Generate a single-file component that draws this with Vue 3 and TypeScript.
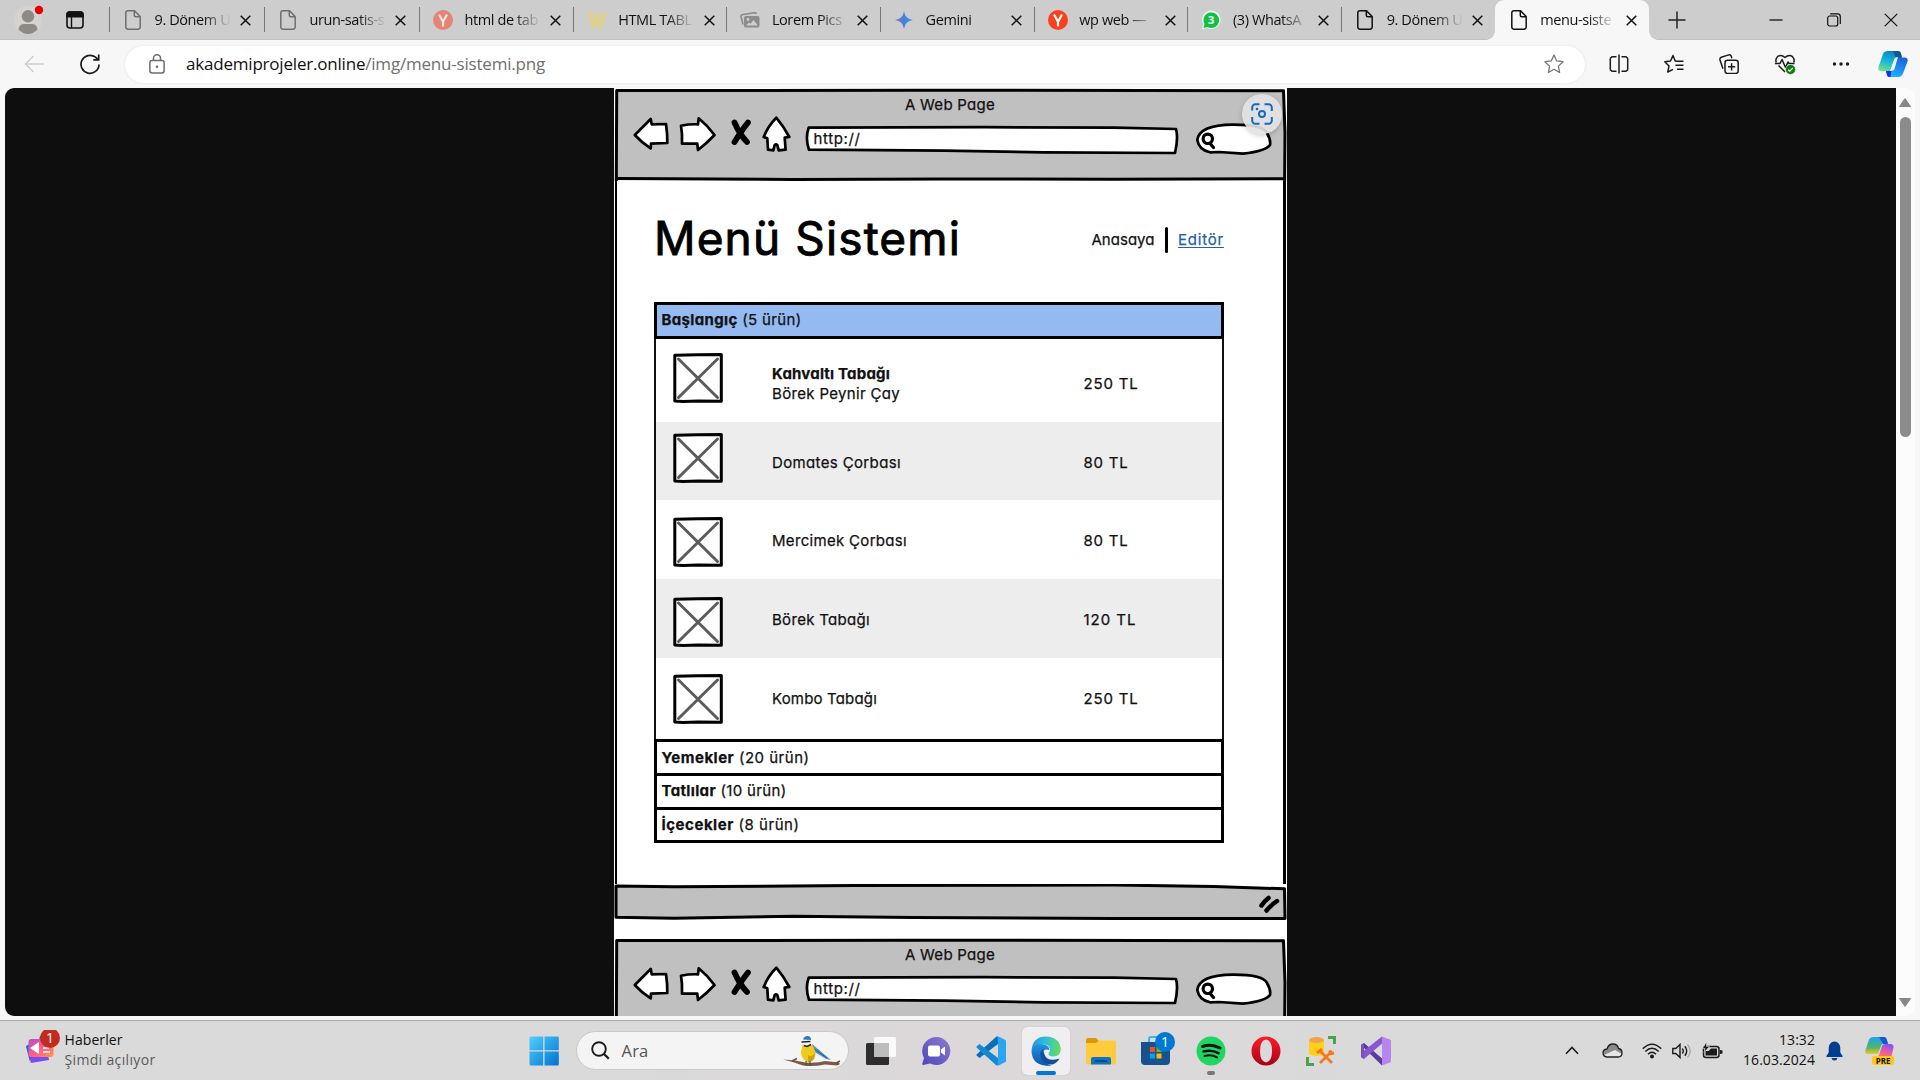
<script setup lang="ts">
interface Tab {
  icon: 'file' | 'yandex' | 'w' | 'photos' | 'gemini' | 'whatsapp'
  title: string
  faded?: boolean
  active?: boolean
}

interface Dish {
  name: string
  nameWidth: number
  detail?: string
  detailWidth?: number
  price: string
  priceWidth: number
  height: number
  thumbOffset: number
}

const tabs: Tab[] = [
  { icon: 'file', title: '9. Dönem U', faded: true },
  { icon: 'file', title: 'urun-satis-s', faded: true },
  { icon: 'yandex', title: 'html de tab', faded: true },
  { icon: 'w', title: 'HTML TABL' },
  { icon: 'photos', title: 'Lorem Pics' },
  { icon: 'gemini', title: 'Gemini' },
  { icon: 'yandex', title: 'wp web —' },
  { icon: 'whatsapp', title: '(3) WhatsA' },
  { icon: 'file', title: '9. Dönem U' },
  { icon: 'file', title: 'menu-siste', active: true },
]

const dishes: Dish[] = [
  { name: 'Kahvaltı Tabağı', nameWidth: 118, detail: 'Börek Peynir Çay', detailWidth: 128, price: '250 TL', priceWidth: 55, height: 82.5, thumbOffset: 14 },
  { name: 'Domates Çorbası', nameWidth: 129, price: '80 TL', priceWidth: 45, height: 78.5, thumbOffset: 11.5 },
  { name: 'Mercimek Çorbası', nameWidth: 135, price: '80 TL', priceWidth: 45, height: 79, thumbOffset: 17 },
  { name: 'Börek Tabağı', nameWidth: 98, price: '120 TL', priceWidth: 53, height: 78.7, thumbOffset: 18 },
  { name: 'Kombo Tabağı', nameWidth: 105, price: '250 TL', priceWidth: 55, height: 81.8, thumbOffset: 16.8 },
]

const sections = [
  { name: 'Yemekler', count: '(20 ürün)', width: 148 },
  { name: 'Tatlılar', count: '(10 ürün)', width: 125 },
  { name: 'İçecekler', count: '(8 ürün)', width: 138 },
]

const windows = ['menu', 'next']

/* Tracks a line of text out, or in, to a given width. */
const vFit = {
  mounted(el: HTMLElement, binding: { value: number }) {
    const length = (el.textContent ?? '').length
    const natural = el.getBoundingClientRect().width
    el.style.letterSpacing = `${(binding.value - natural) / length}px`
  },
}
</script>

<template>
  <div class="screen">
    <header class="tabbar">
      <svg class="profile" width="32" height="32" viewBox="0 0 32 32">
        <circle cx="15" cy="18" r="14" fill="#d5d3cf" />
        <circle cx="15" cy="14.300" r="6.200" fill="#8d8985" />
        <path d="M5.500 27.500Q6 22 11 22h8q5 0 5.500 5.500Q20 32 15 32T5.500 27.500Z" fill="#8d8985" />
        <circle cx="26" cy="8" r="4.200" fill="#e60000" />
      </svg>
      <svg class="workspaces" width="20" height="20" viewBox="0 0 20 20">
        <rect x="2" y="2" width="16" height="16" rx="3" fill="none" stroke="#111" stroke-width="1.600" />
        <path d="M1.200 7.500V4.500a3.300 3.300 0 0 1 3.300-3.300h11a3.300 3.300 0 0 1 3.300 3.300v3Z" fill="#111" />
        <path d="M6.500 7v11" stroke="#111" stroke-width="1.400" />
      </svg>
      <div class="tabs">
        <div v-for="(tab, i) in tabs" :key="i" class="tab" :class="{ active: tab.active, faded: tab.faded }">
          <span class="tab-icon">
            <svg v-if="tab.icon === 'file'" width="16" height="20" viewBox="0 0 16 20" fill="none" stroke="currentColor" stroke-width="1.500">
              <path d="M3 .800h6.500L15.200 6.500V17a2.200 2.200 0 0 1-2.200 2.200H3A2.200 2.200 0 0 1 .800 17V3A2.200 2.200 0 0 1 3 .800Z" />
              <path d="M9.300 1v4.200a1.500 1.500 0 0 0 1.500 1.500H15" />
            </svg>
            <svg v-else-if="tab.icon === 'yandex'" width="20" height="20" viewBox="0 0 20 20">
              <circle cx="10" cy="10" r="10" fill="#fc3f1d" />
              <path d="M6 4.500l4 7.200M14 4.500l-4 7.200V16.500" fill="none" stroke="#fff" stroke-width="2.200" />
            </svg>
            <svg v-else-if="tab.icon === 'w'" width="18" height="20" viewBox="0 0 18 20">
              <path d="M1 1l4.500 17L9 3l3.500 15L17 1" fill="none" stroke="#e6d36c" stroke-width="2.200" />
            </svg>
            <svg v-else-if="tab.icon === 'photos'" width="20" height="16" viewBox="0 0 20 16">
              <path d="M3 12.500L1 4.500Q.700 3 2 2.700L14.500.700Q16 .600 16.300 2" fill="none" stroke="#8b8b8b" stroke-width="1.600" />
              <rect x="4" y="4" width="15.500" height="11.500" rx="2" fill="#8b8b8b" />
              <circle cx="8" cy="7.500" r="1.400" fill="#cdcdcd" />
              <path d="M6 13.500l3-3 1.500 1.200 3.200-3.700 4 5.500Z" fill="#cdcdcd" />
            </svg>
            <svg v-else-if="tab.icon === 'gemini'" width="18" height="18" viewBox="0 0 18 18">
              <defs>
                <linearGradient id="gem" x1="0" y1="0" x2="1" y2="0">
                  <stop offset="0" stop-color="#8a6fc8" />
                  <stop offset=".5" stop-color="#4a80d8" />
                  <stop offset="1" stop-color="#2aa0ea" />
                </linearGradient>
              </defs>
              <path d="M9 0Q10 8 18 9 10 10 9 18 8 10 0 9 8 8 9 0Z" fill="url(#gem)" />
            </svg>
            <svg v-else width="20" height="20" viewBox="0 0 20 20">
              <path d="M1 19.500l1-5.500A9.300 9.300 0 1 1 6 18Z" fill="#e8f3ea" />
              <path d="M2.500 18l1-4A7.800 7.800 0 1 1 6.500 17Z" fill="#12c143" />
              <text x="10.200" y="14" text-anchor="middle" class="wa-count">3</text>
            </svg>
          </span>
          <span class="tab-title">{{ tab.title }}</span>
          <svg class="tab-close" width="11" height="11" viewBox="0 0 11 11"><path d="M.700.700l9.600 9.600M10.300.700L.700 10.300" stroke="#111" stroke-width="1.500" /></svg>
        </div>
      </div>
      <svg class="new-tab" width="18" height="18" viewBox="0 0 18 18"><path d="M9 .500v17M.500 9h17" stroke="#222" stroke-width="1.500" /></svg>
      <div class="captions">
        <svg width="14" height="14" viewBox="0 0 14 14"><path d="M.500 7h13" stroke="#111" stroke-width="1.300" /></svg>
        <svg width="14" height="14" viewBox="0 0 14 14" fill="none" stroke="#111" stroke-width="1.200">
          <rect x=".700" y="3" width="10" height="10" rx="2" /><path d="M3.200.900H10.500a2.800 2.800 0 0 1 2.800 2.800V11" />
        </svg>
        <svg width="14" height="14" viewBox="0 0 14 14"><path d="M.800.800l12.400 12.400M13.200.800L.800 13.200" stroke="#111" stroke-width="1.200" /></svg>
      </div>
    </header>

    <div class="toolbar">
      <svg class="back" width="21" height="18" viewBox="0 0 21 18" fill="none" stroke="#cfcfcf" stroke-width="1.600"><path d="M20 9H1.500M9.500 1L1.500 9l8 8" /></svg>
      <svg class="reload" width="21" height="21" viewBox="0 0 21 21" fill="none" stroke="#1b1b1b" stroke-width="1.700">
        <path d="M19 10.500A9 9 0 1 1 15.500 3.200L18 5.500" /><path d="M18.700.500v5.300h-5.400" />
      </svg>
      <div class="address">
        <svg width="16" height="20" viewBox="0 0 16 20" fill="none" stroke="#6d6d6d" stroke-width="1.500">
          <rect x=".900" y="6.500" width="14.200" height="12.500" rx="2.200" /><path d="M4.500 6.500V4.300a3.500 3.500 0 0 1 7 0v2.200" />
          <circle cx="8" cy="12.700" r="1.300" fill="#6d6d6d" stroke="none" />
        </svg>
        <span v-fit="359" class="url">akademiprojeler.online<span class="path">/img/menu-sistemi.png</span></span>
        <svg class="star" width="20" height="20" viewBox="0 0 20 20" fill="none" stroke="#767676" stroke-width="1.300" stroke-linejoin="round">
          <path d="M10 1l2.700 5.900 6.400.800-4.700 4.400 1.200 6.400L10 15.300l-5.600 3.200 1.200-6.400L.900 7.700l6.400-.800Z" />
        </svg>
      </div>
      <div class="actions">
        <svg width="20" height="20" viewBox="0 0 20 20" fill="none" stroke="#1b1b1b" stroke-width="1.500">
          <path d="M7.500 2.800H3.500A2.200 2.200 0 0 0 1.300 5v10a2.200 2.200 0 0 0 2.200 2.200h4M12.500 2.800h4A2.200 2.200 0 0 1 18.700 5v10a2.200 2.200 0 0 1-2.200 2.200h-4M10 .500v19" />
        </svg>
        <svg width="20" height="20" viewBox="0 0 20 20" fill="none" stroke="#1b1b1b" stroke-width="1.500" stroke-linejoin="round">
          <path d="M13 7.300l-1.800-.300L9 1.500 6.500 7 .800 7.700 5 12l-1.200 6L9 15.300M13 7.300h6.500M11.500 11.300h8M13 15.300h6.500" />
        </svg>
        <svg width="20" height="20" viewBox="0 0 20 20" fill="none" stroke="#1b1b1b" stroke-width="1.500">
          <path d="M4 14.800L1 6Q.500 4 2.300 3.300L9.700.900Q11.800.500 12.300 2.400l.500 1.800" />
          <rect x="6" y="6.200" width="13.200" height="13.200" rx="2.500" /><path d="M12.600 9.200v7.200M9 12.800h7.200" />
        </svg>
        <svg width="21" height="21" viewBox="0 0 21 21" fill="none" stroke="#1b1b1b" stroke-width="1.500" stroke-linejoin="round">
          <path d="M1.300 8.500Q0 5 2.500 2.700 6-.200 10 3.500q4-3.700 7.500-.800 2.500 2.300 1.200 5.800M3.500 11.500L10 18" />
          <path d="M0 9.500h5l2-4 3.500 8L13 8l1 1.500h5.500" />
          <circle cx="15.500" cy="15.500" r="5" fill="#107c10" stroke="#f7f7f7" stroke-width=".600" /><path d="M13.200 15.700l1.600 1.500 3-3.200" stroke="#fff" stroke-width="1.200" />
        </svg>
        <svg width="20" height="20" viewBox="0 0 20 20" fill="#1b1b1b"><circle cx="3.500" cy="10" r="1.700" /><circle cx="10" cy="10" r="1.700" /><circle cx="16.500" cy="10" r="1.700" /></svg>
      </div>
      <svg class="copilot" width="30" height="28" viewBox="0 0 30 28">
        <defs>
          <linearGradient id="cpA" x1=".6" y1="0" x2=".3" y2="1"><stop offset="0" stop-color="#0a7fc0" /><stop offset=".5" stop-color="#12b5dd" /><stop offset="1" stop-color="#6be08a" /></linearGradient>
          <linearGradient id="cpB" x1=".7" y1="0" x2=".3" y2="1"><stop offset="0" stop-color="#1b62e0" /><stop offset="1" stop-color="#1fb4ff" /></linearGradient>
        </defs>
        <path d="M10 1h10q2 0 2.800 2L24 7h-4q-3 0-4 3l-3 9q-1 2-3.500 2H3Q-.500 21 .500 17L5 4q1.200-3 5-3Z" fill="url(#cpA)" />
        <path d="M15 1h5q2 0 2.800 2L24 8h-6Z" fill="#115c86" />
        <path d="M20 27H11q-1.500 0-2-2l-1-4h2q3 0 4-3l3-9q.800-1.500 3-1.500h7q3.500.500 2.500 4L25 23.500Q23.500 27 20 27Z" fill="url(#cpB)" />
        <path d="M8 21h2q2.500 0 3.500-2l-1 8H11q-1.500 0-2-2Z" fill="#1437d8" />
        <path d="M16 10q1-3 4-3l-3.500 12q-.800 2-3.500 2-2.500 0-2 0 1.500-.500 2-2Z" fill="#eef6fb" />
      </svg>
    </div>

    <main class="viewport">
      <div class="canvas">
        <div class="sheet">
          <section v-for="w in windows" :key="w" class="wire" :class="w">
            <div class="chrome">
              <svg class="chrome-art" width="673" height="93" viewBox="0 0 673 93" stroke-linejoin="round" stroke-linecap="round">
                <path d="M2.700 2.500H669.500L671 92H2.700Z" fill="#c0c0c0" />
                <path d="M2.300 94L2.700 2.600 300 2.200 669.500 2.700 671 45 670.600 94" fill="none" stroke="#000" stroke-width="3" />
                <path d="M3 90.500L180 91.500 330 91 500 91.200 669 90.700" fill="none" stroke="#000" stroke-width="3" />
                <g fill="#fff" stroke="#000" stroke-width="2.700">
                  <path d="M20.800 47L36.700 31 37.700 36.300 52 36Q53.500 46 53.300 55L37 55.700 36.700 60.300Q28 55 20.800 47Z" />
                  <path d="M67 37.700Q75 36 84 36.300L84.700 30.300Q94 38 100.500 47 92 56 84 62L83.300 55.700 68 55.700Q68.500 46 67 37.700Z" />
                  <path d="M162.300 29.700Q170 39 175.300 49L170.700 49.700 171.600 61.700 164.700 62.300 163.300 57Q162 55.800 160.700 57L159.300 62.300 154 61.700 153.300 50.300 149.700 49Q154 38 162.300 29.700Z" />
                  <path d="M194.700 39.700L370 39.200 500 39.700 562 41Q564.500 50 561 65L430 64.300 330 62.700 195 61.700Q191 50 194.700 39.700Z" />
                  <path d="M583.300 52Q585 37 619 36.600 649 36.500 653 45 657 52 656 57 652 63 629 65.700L605 64 596 64.300Q585 62 583.300 52Z" />
                </g>
                <g fill="none" stroke="#000">
                  <path d="M120.500 34.500Q126 47 133 54M134 34.500Q128 42 120.500 54" stroke-width="5.800" />
                  <circle cx="593.800" cy="50.800" r="4.700" stroke-width="3.200" />
                  <path d="M596 55.500l3.500 4" stroke-width="3.200" />
                </g>
              </svg>
              <div class="chrome-text">
                <div class="page-title"><span v-fit="90">A Web Page</span></div>
                <div class="page-url"><span v-fit="47">http://</span></div>
              </div>
            </div>

            <template v-if="w === 'menu'">
              <div class="page">
                <div class="heading">
                  <h1><span v-fit="307">Menü Sistemi</span></h1>
                  <nav>
                    <span v-fit="63">Anasaya</span>
                    <i class="bar" />
                    <a v-fit="46">Editör</a>
                  </nav>
                </div>

                <div class="accordion">
                  <div class="section open"><span v-fit="140"><b>Başlangıç</b> (5 ürün)</span></div>
                  <div class="dishes">
                    <div v-for="d in dishes" :key="d.name" class="dish" :style="{ height: d.height + 'px' }">
                      <svg class="thumb" :style="{ marginTop: d.thumbOffset + 'px' }" width="50" height="50" viewBox="0 0 50 50">
                        <path d="M1.800 2.200L25 1.800 48.300 1.500V48.200L25 48 10 48.500 1.800 48Z" fill="#fff" stroke="#000" stroke-width="3" stroke-linejoin="round" />
                        <path d="M5.500 6L44.500 44.500M44.500 6L5.500 44.500" stroke="#5c5c5c" stroke-width="3" stroke-linecap="round" />
                      </svg>
                      <div class="dish-name">
                        <span v-fit="d.nameWidth" :class="{ strong: d.detail }">{{ d.name }}</span>
                        <span v-if="d.detail" v-fit="d.detailWidth">{{ d.detail }}</span>
                      </div>
                      <div class="dish-price"><span v-fit="d.priceWidth">{{ d.price }}</span></div>
                    </div>
                  </div>
                  <div v-for="s in sections" :key="s.name" class="section">
                    <span v-fit="s.width"><b>{{ s.name }}</b> {{ s.count }}</span>
                  </div>
                </div>
              </div>

              <svg class="status" width="673" height="36" viewBox="0 0 673 36" stroke-linejoin="round" stroke-linecap="round">
                <path d="M2 2L60 2.800 240 1.500 500 1 600 2.500 670.500 4.800 671 34.500 500 34.500 300 33.500 180 32.200 60 34.300 2 33.300Z" fill="#c0c0c0" stroke="#000" stroke-width="3" />
                <path d="M647.500 21.500Q650 17.500 654.500 14M652.500 26.500Q657 21 663 17" fill="none" stroke="#000" stroke-width="4.500" />
              </svg>
            </template>
          </section>
        </div>
        <div class="visual-search">
          <svg width="22" height="22" viewBox="0 0 22 22" fill="none" stroke="#0f6cbd" stroke-width="2">
            <path d="M1.200 7.500V4.500A3.300 3.300 0 0 1 4.500 1.200M7.500 1.200h1M13.500 1.200h4a3.300 3.300 0 0 1 3.300 3.300v3.500M20.800 14v3.500a3.300 3.300 0 0 1-3.300 3.300h-4M8.500 20.800h-4a3.300 3.300 0 0 1-3.300-3.300V14M4.500 1.200h3.500" />
            <circle cx="11" cy="11" r="3" /><circle cx="6" cy="6" r="1.300" fill="#0f6cbd" stroke="none" />
          </svg>
        </div>
      </div>
      <div class="scrollbar">
        <svg width="12" height="9" viewBox="0 0 12 9"><path d="M6 .500L11.500 8.500H.500Z" fill="#888" stroke="#888" stroke-linejoin="round" /></svg>
        <div class="thumb-bar" />
        <svg class="down" width="12" height="9" viewBox="0 0 12 9"><path d="M6 8.500L.500.500H11.500Z" fill="#888" stroke="#888" stroke-linejoin="round" /></svg>
      </div>
    </main>

    <footer class="taskbar">
      <div class="widgets">
        <svg width="36" height="36" viewBox="0 0 36 36">
          <defs><linearGradient id="nw" x1="0" y1="0" x2="1" y2="1"><stop offset="0" stop-color="#b24fc8" /><stop offset=".5" stop-color="#ff5a91" /><stop offset="1" stop-color="#ff9a3c" /></linearGradient></defs>
          <path d="M14 6l14-4v12H12Z" fill="#1769d8" />
          <path d="M0 16l20-3 3 17L5 33Z" fill="#7a4df0" /><path d="M0 16l4-2v18Z" fill="#2a66c8" />
          <rect x="2.500" y="9" width="25" height="18" rx="3" fill="url(#nw)" />
          <path d="M4 18l9-6v12Z" fill="#fff" /><path d="M17 18h6M17 22h7" stroke="#fff" stroke-width="1.600" />
          <circle cx="24" cy="8" r="10" fill="#c42b1c" />
          <text x="24" y="13" text-anchor="middle" class="badge-text">1</text>
        </svg>
        <div class="widget-text"><span v-fit="58">Haberler</span><span v-fit="91" class="dim">Şimdi açılıyor</span></div>
      </div>

      <div class="pinned">
        <svg class="start" width="30" height="30" viewBox="0 0 30 30">
          <defs><linearGradient id="win" x1="0" y1="0" x2="1" y2="1"><stop offset="0" stop-color="#4fd0fb" /><stop offset="1" stop-color="#0071d2" /></linearGradient></defs>
          <path d="M.500 2Q.500.500 2 .500h12.200v13.700H.500ZM15.500.500H28.500q1.300 0 1.300 1.300V14.200H15.500ZM.500 15.500h13.700V29.500H2Q.500 29.500.500 28ZM15.500 15.500H29.800V28q0 1.500-1.500 1.500H15.500Z" fill="url(#win)" />
        </svg>
        <div class="search">
          <svg width="19" height="19" viewBox="0 0 19 19" fill="none" stroke="#1c1c1c" stroke-width="1.900"><circle cx="8" cy="8" r="6.800" /><path d="M12.800 12.800l5 5" stroke-width="2.300" /></svg>
          <span v-fit="27" class="search-label">Ara</span>
          <svg class="bird" width="60" height="32" viewBox="0 0 60 32">
            <path d="M1 24.500Q14 25 23 27.500q12 1 20-1.500l14 1.500q2 2-2 3l-12-1q-12 2.500-22 1-9-3.500-20-6Z" fill="#7a5c46" />
            <path d="M54 28l4-2M10 26l5-2.500" stroke="#6b4e3c" stroke-width="1.500" />
            <path d="M30 9L49 25l-5-1-13-8Z" fill="#4f94cf" /><path d="M31 13l14 10" stroke="#35587a" stroke-width="1" />
            <path d="M21 8q7-2 11 5 3 6 0 11-3 4-7 3-6-4-6-10Z" fill="#f0cb1d" />
            <path d="M26 20q4 3 7-3l-1 7q-3 4-6 3Z" fill="#c9a512" />
            <path d="M20 5q3-3 8-1l2 5q-3 3-7 2-3-2-3-6Z" fill="#f7f7f2" />
            <path d="M21 4.500Q22 1 25.500 1t3.500 4Z" fill="#2a7cc4" />
            <path d="M19.500 7l9-.500M22 10.500l3 1 4-2" stroke="#1d2733" stroke-width="1.600" fill="none" />
            <path d="M24 26v4M28 26v4" stroke="#444" stroke-width="1" />
          </svg>
        </div>
        <div class="app"><svg width="30" height="30" viewBox="0 0 30 30">
          <rect y="7" width="23" height="22" rx="1.500" fill="#2e2e2e" /><rect x="8" y="1" width="22" height="20" rx="1.500" fill="#fafafa" /><path d="M8 7h15v14H9.500Q8 21 8 19.500Z" fill="#bdbdbd" />
        </svg></div>
        <div class="app"><svg width="30" height="30" viewBox="0 0 30 30">
          <defs><linearGradient id="ch" x1="1" y1="0" x2="0" y2="1"><stop offset="0" stop-color="#8e7bd0" /><stop offset="1" stop-color="#4c48b8" /></linearGradient></defs>
          <path d="M15 1a14 14 0 1 1-6 26.500L2 29q-1-.300-.500-2L3 22A14 14 0 0 1 15 1Z" fill="url(#ch)" /><rect x="7" y="9.500" width="12" height="11" rx="2" fill="#fff" /><path d="M20 13.500l4-3v9l-4-3Z" fill="#fff" />
        </svg></div>
        <div class="app"><svg width="30" height="30" viewBox="0 0 30 30">
          <path d="M22 8L3.500 22 .500 19.500V18.500L20.500.500 23 1Z" fill="#0a6ebd" /><path d="M22 22L3.500 8 .500 10.500v1L20.500 29.500 23 29Z" fill="#1787d3" />
          <path d="M21.500.500Q22 .200 23 .700l6 3Q30 4.200 30 5.200V24.800q0 1-1 1.500l-6 3q-1 .500-1.500 0L22 22V8Z" fill="#2aa5f0" />
        </svg></div>
        <div class="app current"><svg width="30" height="30" viewBox="0 0 30 30">
          <defs>
            <linearGradient id="eA" x1="0" y1=".3" x2="1" y2=".4"><stop offset="0" stop-color="#2398de" /><stop offset=".5" stop-color="#31c1d8" /><stop offset="1" stop-color="#66dc5a" /></linearGradient>
            <linearGradient id="eB" x1="0" y1="0" x2="0" y2="1"><stop offset="0" stop-color="#2393e6" /><stop offset="1" stop-color="#0c55a8" /></linearGradient>
          </defs>
          <path d="M.500 14Q2 .500 15 .500 28.500 1 29.800 13q0 7.500-8 7.500-5.500-.500-4-3.500 3-4-1-7.500Q9 5.500.500 14Z" fill="url(#eA)" />
          <path d="M.500 15Q2 8 10 8q8 .500 8.500 6-7-2-7 5.500.500 8 9 10Q17 30 14 29.500 1 28 .500 15Z" fill="url(#eB)" />
          <path d="M12 13q-4 3-2 9 4 7.500 11.500 6.500 5-2 7-6-12 4-15-4-1-3-1.500-5.500Z" fill="#0f4f9c" />
        </svg><i class="running" /></div>
        <div class="app"><svg width="30" height="28" viewBox="0 0 30 28">
          <path d="M0 3Q0 1 2 1h8l3 3-3 4H0Z" fill="#d9980a" /><path d="M0 6h10l3-2.500H28q2 0 2 2V26q0 1.500-1.500 1.500h-27Q0 27.500 0 26Z" fill="#ffcb3d" />
          <path d="M5 27.500V22q0-2 2-2H23q2 0 2 2v5.500Z" fill="#1072c6" /><path d="M9 24h12" stroke="#073e78" stroke-width="1.600" />
        </svg></div>
        <div class="app"><svg width="38" height="38" viewBox="0 0 38 38" class="store">
          <path d="M12 10V7q0-2 2-2h10" fill="none" stroke="#35b6f2" stroke-width="2" /><path d="M4 10H33V29q0 4-4 4H8q-4 0-4-4Z" fill="#17528f" />
          <path d="M13 15h5v5h-5Z" fill="#f25022" /><path d="M19.500 15h5v5h-5Z" fill="#7fba00" /><path d="M13 21.500h5v5h-5Z" fill="#00a4ef" /><path d="M19.500 21.500h5v5h-5Z" fill="#ffb900" />
          <circle cx="28" cy="10" r="10" fill="#0078d4" /><text x="28" y="15" text-anchor="middle" class="badge-text">1</text>
        </svg></div>
        <div class="app"><svg width="30" height="30" viewBox="0 0 30 30" fill="none" stroke="#111" stroke-linecap="round">
          <circle cx="15" cy="15" r="14.500" fill="#1ed760" stroke="none" /><path d="M6.500 10.500Q15.500 7.500 24 12" stroke-width="3" /><path d="M7.500 15.500q8-2.300 15 1.600" stroke-width="2.500" /><path d="M8.500 20q7-1.800 12.500 1.400" stroke-width="2" />
        </svg><i class="running idle" /></div>
        <div class="app"><svg width="30" height="30" viewBox="0 0 30 30">
          <defs><linearGradient id="op" x1="0" y1="0" x2="0" y2="1"><stop offset="0" stop-color="#ff1b2d" /><stop offset="1" stop-color="#a70014" /></linearGradient></defs>
          <path fill-rule="evenodd" d="M15 .500a14.500 14.500 0 1 0 0 29 14.500 14.500 0 0 0 0-29ZM15 3.500q6 1 6 11.500t-6 11.500q-6-1-6-11.500T15 3.500Z" fill="url(#op)" />
        </svg></div>
        <div class="app"><svg width="30" height="30" viewBox="0 0 30 30" fill="none">
          <path d="M22 1.500h6.500V8M1.500 21v7.500H8" stroke="#4ba24b" stroke-width="3" /><path d="M3 4v14q7 4 15 0V4Z" fill="#ffcf1a" /><ellipse cx="10.500" cy="4" rx="7.500" ry="3" fill="#f0a24c" />
          <path d="M14 15l12 12M26 15L14 27" stroke="#f07a1c" stroke-width="2.800" /><path d="M11 17l5-4M23.500 14.500l1.500 3 3-.500" stroke="#f07a1c" stroke-width="3" />
        </svg></div>
        <div class="app"><svg width="30" height="30" viewBox="0 0 30 30">
          <path d="M0 9l3-2L24 25l-3 4.500Z" fill="#5b3a9c" /><path d="M0 21l3 2L24 5 21 .500 0 17Z" fill="#8757cf" /><path d="M0 9l3-2v16l-3-2Z" fill="#7a52b8" />
          <path d="M21 .500l8 3q1 .500 1 1.500V25q0 1-1 1.500l-8 3Z" fill="#b685ef" />
        </svg></div>
      </div>

      <div class="tray">
        <svg class="chevron" width="14" height="9" viewBox="0 0 14 9"><path d="M1 7.800L7 1.500l6 6.300" fill="none" stroke="#1b1b1b" stroke-width="1.600" /></svg>
        <svg class="cloud" width="21" height="15" viewBox="0 0 21 15"><path d="M5 14Q1 13.500 1 10t4-4Q6.500 1 11 1t5.500 4.500Q20 6 20 10t-4 4Z" fill="#8b8b8b" /><path d="M2 12l11-5 7 4q-1 3-4 3H5Z" fill="#e6e6e6" /><path d="M5 14Q1 13.500 1 10t4-4Q6.500 1 11 1t5.500 4.500Q20 6 20 10t-4 4Z" fill="none" stroke="#222" stroke-width="1.300" /></svg>
        <svg class="wifi" width="20" height="16" viewBox="0 0 20 16" fill="none" stroke="#1b1b1b" stroke-width="1.400"><path d="M.700 5.800q9.300-9 18.600 0M3.300 8.600q6.700-6.500 13.400 0M6 11.300q4-4 8 0" /><circle cx="10" cy="13.500" r="2" fill="#1b1b1b" stroke="none" /></svg>
        <svg class="volume" width="20" height="16" viewBox="0 0 20 16" fill="none" stroke="#1b1b1b" stroke-width="1.400"><path d="M.800 5.500h3L8 1.500v13l-4.200-4h-3ZM10.300 5.500q2 2.500 0 5M12.800 3.300q3.800 4.700 0 9.400" /><path d="M15.500 1.500q5.500 6.500 0 13" stroke="#aaa" /></svg>
        <svg class="battery" width="21" height="17" viewBox="0 0 21 17"><rect x="1.500" y="4.500" width="15.500" height="11" rx="2.500" fill="none" stroke="#1b1b1b" stroke-width="1.500" /><path d="M3.500 13.500V9h3L9 6.500h6v7Z" fill="#1b1b1b" /><path d="M18 8l2.500.500v3L18 12Z" fill="#1b1b1b" /><path d="M4.500 0L.500 6.500H3L2 10.500 7.500 4.500H4.500Z" fill="#1b1b1b" stroke="#dadada" stroke-width=".600" /></svg>
        <div class="clock"><span v-fit="36">13:32</span><span v-fit="72">16.03.2024</span></div>
        <svg class="bell" width="17" height="20" viewBox="0 0 17 20" fill="#003e92"><path d="M8.500.500Q14 1 14.300 7v4.500l2.300 3.500q.400 1-.600 1H1q-1 0-.600-1l2.300-3.500V7Q3 1 8.500.500Z" /><path d="M5.500 17h6q-.500 2.500-3 2.500t-3-2.500Z" /></svg>
        <svg class="pre" width="30" height="30" viewBox="0 0 30 30">
          <defs>
            <linearGradient id="pA" x1="0" y1="0" x2="0" y2="1"><stop offset="0" stop-color="#1aa3f0" /><stop offset=".6" stop-color="#4cb56c" /><stop offset="1" stop-color="#e8c928" /></linearGradient>
            <linearGradient id="pB" x1="0" y1="1" x2=".5" y2="0"><stop offset="0" stop-color="#ff7a4c" /><stop offset=".5" stop-color="#e85aa8" /><stop offset="1" stop-color="#8a55ee" /></linearGradient>
          </defs>
          <path d="M8 1h11q2 0 2.500 2L23 7h-4q-2 0-3 3l-3 8H3q-3.500 0-2.500-4L4 3.500Q5 1 8 1Z" fill="url(#pA)" /><path d="M14 1h5q2 0 2.500 2L23 8h-5Z" fill="#1657d8" />
          <path d="M14 19l3-9q.500-2 3-2h6q3 .500 2.500 4l-2 8H13Z" fill="url(#pB)" />
          <rect x="7" y="20" width="22" height="9" rx="2" fill="#ffc814" /><text x="18.200" y="27.500" text-anchor="middle" class="pre-text">PRE</text>
        </svg>
      </div>
    </footer>
  </div>
</template>

<style>
html,
body {
  margin: 0;
  overflow: hidden;
}
</style>

<style scoped>
.screen {
  width: 1920px;
  height: 1080px;
  display: flex;
  flex-direction: column;
  overflow: hidden;
  background: #f7f7f7;
  font-family: 'Open Sans', 'Noto Sans', sans-serif;
  font-size: 14.5px;
  color: #111;
}
.screen * {
  box-sizing: border-box;
}
svg {
  display: block;
  flex: none;
}
span {
  white-space: nowrap;
}

/* Tab strip */
.tabbar {
  display: flex;
  align-items: center;
  height: 40px;
  background: #cdcdcd;
  border-bottom: 1px solid #c2c2c2;
  flex: none;
}
.profile {
  margin: 2px 0 0 13px;
  align-self: flex-start;
}
.workspaces {
  margin-left: 20px;
}
.tabs {
  display: flex;
  margin-left: 24px;
  height: 40px;
}
.tab {
  width: 153.700px;
  height: 40px;
  display: flex;
  align-items: center;
  position: relative;
}
.tab:nth-child(-n + 2) {
  width: 155px;
}
.tab::before {
  content: '';
  width: 1px;
  height: 25px;
  background: #777;
  flex: none;
}
.tab.active {
  background: #f7f7f7;
  border-radius: 9px 9px 0 0;
}
.tab.active::before {
  background: transparent;
}
.tab.active::after {
  content: '';
  position: absolute;
  left: -9px;
  right: -9px;
  bottom: 0;
  height: 9px;
  background:
    radial-gradient(circle at 0 0, transparent 8.500px, #f7f7f7 9px) left / 9px 9px no-repeat,
    radial-gradient(circle at 100% 0, transparent 8.500px, #f7f7f7 9px) right / 9px 9px no-repeat;
}
.tab-icon {
  width: 22px;
  margin-left: 12px;
  display: flex;
  justify-content: center;
  flex: none;
}
.tab.faded .tab-icon {
  opacity: 0.5;
}
.tab-title {
  width: 85px;
  margin-left: 10.500px;
  letter-spacing: -0.400px;
  line-height: 22px;
  flex: none;
  mask-image: linear-gradient(90deg, #000 48px, transparent 76px);
}
.tab-close {
  margin: 2px 0 0 0.500px;
}
.new-tab {
  margin-left: 19px;
}
.wa-count {
  font: bold 11px 'Open Sans', sans-serif;
  fill: #fff;
}
.captions {
  display: flex;
  gap: 43.500px;
  margin-left: 83.500px;
}

/* Toolbar */
.toolbar {
  display: flex;
  align-items: center;
  height: 48px;
  flex: none;
}
.back {
  margin-left: 24px;
}
.reload {
  margin-left: 35px;
}
.address {
  width: 1460px;
  height: 37px;
  margin-left: 24px;
  padding: 0 21px 0 24px;
  display: flex;
  align-items: center;
  border-radius: 19px;
  background: #fff;
  box-shadow: 0 0 3px #00000018;
}
.url {
  margin-left: 21px;
  font-size: 17px;
  line-height: 24px;
}
.path {
  color: #707070;
}
.star {
  margin-left: auto;
}
.actions {
  display: flex;
  gap: 35.200px;
  margin-left: 24px;
}
.copilot {
  margin-left: 27px;
}

/* Viewport */
.viewport {
  display: flex;
  height: 927.700px;
  width: 1910px;
  margin-left: 5px;
  border-radius: 9px;
  overflow: hidden;
  flex: none;
}
.canvas {
  position: relative;
  width: 1891px;
  display: flex;
  justify-content: center;
  align-items: flex-start;
  overflow: hidden;
  background: #0e0e0e;
}
.sheet {
  width: 673px;
  background: #fff;
}
.visual-search {
  position: absolute;
  left: 1236.500px;
  top: 6px;
  width: 40px;
  height: 40px;
  border-radius: 50%;
  background: #e2e2e2e8;
  box-shadow: 0 2px 5px #00000030;
  display: flex;
  align-items: center;
  justify-content: center;
}
.scrollbar {
  width: 19px;
  background: #fcfcfc;
  display: flex;
  flex-direction: column;
  align-items: center;
  padding: 10px 1px 9px 0;
}
.thumb-bar {
  width: 11px;
  height: 320px;
  margin-top: 10px;
  border-radius: 6px;
  background: #8b8b8b;
}
.down {
  margin-top: auto;
}

/* Wireframe windows */
.wire {
  font-family: Inter, 'Open Sans', sans-serif;
  font-feature-settings: 'cv11' 1, 'ss03' 1;
  font-size: 15px;
  -webkit-text-stroke: 0.250px;
}
.wire.menu {
  padding-bottom: 17.500px;
}
.chrome {
  display: grid;
  height: 93px;
}
.chrome-art,
.chrome-text {
  grid-area: 1 / 1;
}
.chrome-text {
  z-index: 1;
}
.page-title {
  display: flex;
  padding: 7.100px 0 0 291px;
  line-height: 20px;
}
.page-url {
  display: flex;
  padding: 14px 0 0 199.500px;
  line-height: 20px;
}
.page {
  height: 703px;
  margin: 0 1px;
  padding: 27px 59px 0 36.500px;
  border: solid #000;
  border-width: 0 3px 0 2.500px;
}
.heading {
  display: flex;
  justify-content: space-between;
  height: 60px;
}
h1 {
  display: flex;
  margin: 0 0 0 0.500px;
  font-size: 46px;
  font-weight: 400;
  line-height: 60px;
  color: #000;
  -webkit-text-stroke: 0.900px;
}
nav {
  display: flex;
  align-items: center;
  height: 60px;
  padding-top: 3px;
}
.bar {
  width: 3px;
  height: 26px;
  margin: 0 10px 0 10.500px;
  background: #000;
  border-radius: 2px;
}
nav a {
  color: #2360a8;
  line-height: 15px;
  border-bottom: 1.500px solid #2360a8;
}
.accordion {
  margin-top: 34px;
}
.section {
  display: flex;
  align-items: center;
  height: 33.670px;
  padding: 0 0 1px 5px;
  border: 3px solid #000;
  border-bottom: 0;
}
.section:last-child {
  height: 36.670px;
  border-bottom: 3px solid #000;
}
.section.open {
  height: 37px;
  padding-bottom: 2px;
  border-bottom: 3px solid #000;
  background: #94baf1;
}
.dishes {
  border: solid #111;
  border-width: 0 2px;
}
.dish {
  display: flex;
}
.dish:nth-child(even) {
  background: #ededed;
}
.thumb {
  margin-left: 17.500px;
}
.dish-name,
.dish-price {
  display: flex;
  flex-direction: column;
  justify-content: center;
  align-items: flex-start;
  padding-top: 3.500px;
  line-height: 20px;
}
.dish:first-child > div {
  padding-top: 6.500px;
}
.dish:last-child > div {
  padding: 2px 0 1px;
}
.dish-name {
  width: 311.500px;
  margin-left: 49px;
}
.strong {
  font-weight: 700;
}

/* Taskbar */
.taskbar {
  display: flex;
  height: 60px;
  margin-top: auto;
  border-top: 1px solid #a9a9a9;
  background: linear-gradient(90deg, #dadada 30%, #dcd8d9 50%, #dadada 75%);
  flex: none;
}
.widgets {
  display: flex;
  width: 529px;
  padding: 9px 0 0 25.500px;
}
.widget-text {
  display: flex;
  flex-direction: column;
  align-items: flex-start;
  margin-left: 3px;
  font-size: 14px;
  line-height: 20px;
}
.dim {
  color: #5a5a5a;
}
.badge-text {
  font: 14px 'Open Sans', sans-serif;
  fill: #fff;
}
.pinned {
  display: flex;
  align-items: center;
  height: 59px;
}
.search {
  display: flex;
  align-items: center;
  width: 273px;
  height: 39px;
  margin: 0 4.500px 0 17px;
  padding: 0 6px 0 13.500px;
  border: 1px solid #c8c8c8;
  border-radius: 20px;
  background: #f4f4f4;
}
.search-label {
  margin-left: 12px;
  font-size: 16.500px;
  color: #555;
}
.bird {
  margin-left: auto;
}
.app {
  position: relative;
  display: flex;
  align-items: center;
  justify-content: center;
  width: 48px;
  height: 48px;
  margin: 0 3.500px;
  border-radius: 5px;
}
.app.current {
  background: #f0eef0;
  box-shadow: 0 0 1px #0004;
}
.running {
  position: absolute;
  left: 14px;
  bottom: 0;
  width: 20px;
  height: 4px;
  border-radius: 2px;
  background: #0078d4;
}
.running.idle {
  left: 20px;
  width: 8px;
  background: #777;
}
.tray {
  display: flex;
  align-items: center;
  height: 59px;
  margin: 0 25px 0 auto;
}
.cloud {
  margin-left: 23px;
}
.wifi {
  margin-left: 19px;
}
.volume {
  margin-left: 10px;
}
.battery {
  margin-left: 10px;
}
.clock {
  display: flex;
  flex-direction: column;
  align-items: flex-end;
  margin-left: 20px;
  padding-bottom: 1px;
  font-size: 14px;
  line-height: 20px;
}
.bell {
  margin-left: 11px;
}
.pre {
  margin-left: 22px;
}
.pre-text {
  font: bold 8px 'Open Sans', sans-serif;
  fill: #111;
}
</style>
